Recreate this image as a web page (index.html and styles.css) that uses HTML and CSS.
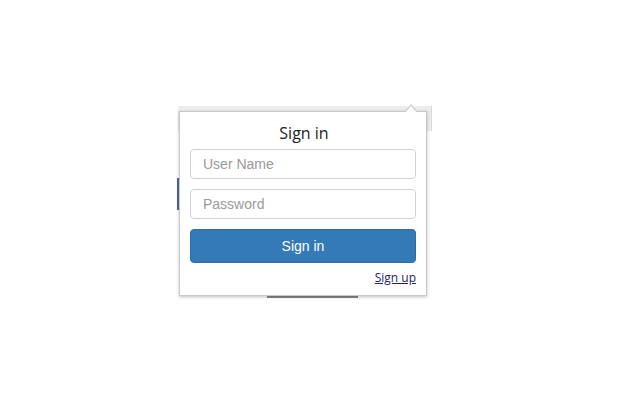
FILE: index.html
```html
<!DOCTYPE html>
<html>
<head>
<meta charset="utf-8">
<link rel="stylesheet" href="styles.css">
</head>
<body>
<div class="stage">
  <div class="bg-band"></div>
  <div class="bg-stripe"></div>
  <div class="bg-bottom"></div>
  <div class="popup">
    <div class="title">Sign in</div>
    <input class="field" type="text" placeholder="User Name">
    <input class="field" type="password" placeholder="Password">
    <button class="btn">Sign in</button>
    <div class="foot"><a href="#" class="link">Sign up</a></div>
  </div>
</div>
</body>
</html>
```
FILE: styles.css
```css
html, body {
  margin: 0;
  padding: 0;
  background: #fff;
}
.stage {
  position: relative;
  width: 640px;
  height: 400px;
  overflow: hidden;
  padding-top: 111px;
  box-sizing: border-box;
}
.bg-band {
  position: absolute;
  left: 178px;
  top: 106px;
  width: 253px;
  height: 25px;
  background: #ececec;
  border-right: 1px solid #d8d8d8;
}
.bg-stripe {
  position: absolute;
  left: 177px;
  top: 178px;
  width: 3px;
  height: 32px;
  background: #4a6aa8;
}
.bg-bottom {
  position: absolute;
  left: 267px;
  top: 294px;
  width: 91px;
  height: 4px;
  background: #888;
}
.popup {
  position: relative;
  margin-left: 179px;
  width: 248px;
  height: 185px;
  box-sizing: border-box;
  background: #fff;
  border: 1px solid #c9c9c9;
  box-shadow: 0 1px 3px rgba(0,0,0,0.25);
  padding: 11px 10px 0 10px;
  display: flex;
  flex-direction: column;
}
.popup::before {
  content: "";
  position: absolute;
  right: 8px;
  top: -8px;
  border-left: 7px solid transparent;
  border-right: 7px solid transparent;
  border-bottom: 8px solid #d0d0d0;
}
.popup::after {
  content: "";
  position: absolute;
  right: 9px;
  top: -6px;
  border-left: 6px solid transparent;
  border-right: 6px solid transparent;
  border-bottom: 7px solid #fff;
}
.title {
  font-family: "Open Sans", "Liberation Sans", sans-serif;
  font-size: 16px;
  line-height: 20px;
  color: #222;
  text-align: center;
  margin-bottom: 6px;
  padding-left: 2px;
}
.field {
  display: block;
  width: 226px;
  height: 30px;
  box-sizing: border-box;
  border: 1px solid #cfcfcf;
  border-radius: 4px;
  padding: 0 12px;
  margin: 0 0 10px 0;
  font-family: "Liberation Sans", Arial, sans-serif;
  font-size: 14px;
  color: #555;
  outline: none;
}
.field::placeholder {
  color: #9a9a9a;
}
.btn {
  display: block;
  width: 226px;
  height: 34px;
  box-sizing: border-box;
  border: 1px solid #2e6da4;
  border-radius: 4px;
  background: #337ab7;
  color: #fff;
  font-family: "Liberation Sans", Arial, sans-serif;
  font-size: 14px;
  padding: 0;
  margin: 0;
}
.foot {
  text-align: right;
  margin-top: 6px;
  line-height: 16px;
}
.link {
  font-family: "Open Sans", "Liberation Sans", sans-serif;
  font-size: 12px;
  color: #1e2070;
  text-decoration: underline;
}
```
